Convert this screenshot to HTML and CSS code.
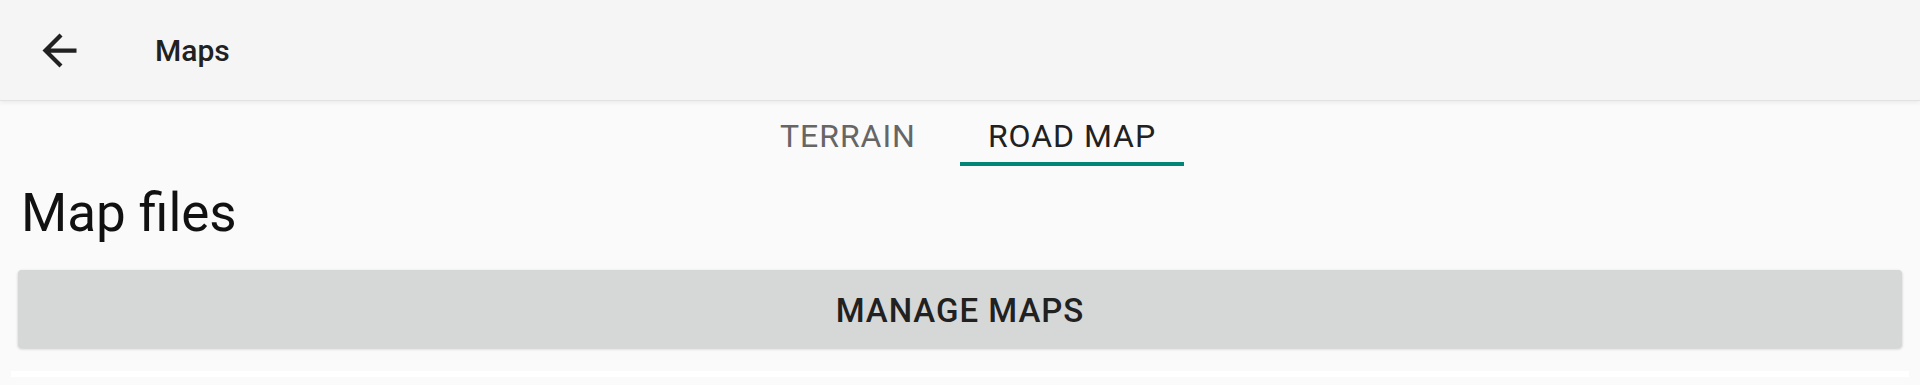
FILE: index.html
```html
<!DOCTYPE html>
<html>
<head>
<meta charset="utf-8">
<link rel="stylesheet" href="styles.css">
</head>
<body>
<header class="toolbar">
  <svg class="back" viewBox="0 0 24 24"><path d="M20 11H7.83l5.59-5.59L12 4l-8 8 8 8 1.41-1.41L7.83 13H20v-2z"/></svg>
  <span class="title">Maps</span>
</header>
<nav class="tabs">
  <div class="tab">TERRAIN</div>
  <div class="tab active">ROAD MAP</div>
</nav>
<main class="content">
  <h1 class="heading">Map files</h1>
  <button class="btn">MANAGE MAPS</button>
  <div class="strip"></div>
</main>
</body>
</html>
```
FILE: styles.css
```css
html, body {
  margin: 0;
  padding: 0;
  background: #fafafa;
  font-family: Roboto, "Liberation Sans", sans-serif;
  width: 1920px;
  height: 385px;
  overflow: hidden;
}
.toolbar {
  height: 101px;
  background: #f5f5f5;
  display: flex;
  align-items: center;
  border-bottom: 1px solid #e2e2e2;
  box-shadow: 0 2px 4px rgba(0,0,0,0.06);
  box-sizing: border-box;
  position: relative;
  z-index: 1;
}
.back {
  width: 51px;
  height: 51px;
  margin-left: 34px;
  fill: #212121;
}
.title {
  margin-left: 70px;
  font-size: 30px;
  font-weight: 500;
  color: #212121;
  margin-top: 1px;
}
.tabs {
  display: flex;
  justify-content: center;
  height: 65px;
}
.tab {
  width: 224px;
  box-sizing: border-box;
  display: flex;
  align-items: center;
  justify-content: center;
  font-size: 32px;
  letter-spacing: 0.03em;
  color: #666;
  border-bottom: 4px solid transparent;
  padding-top: 8px;
}
.tab.active {
  color: #212121;
  border-bottom-color: #008577;
}
.content {
  display: flex;
  flex-direction: column;
}
.heading {
  margin: 15px 0 0 21px;
  font-size: 53px;
  line-height: 64px;
  font-weight: 400;
  color: #111;
}
.btn {
  margin: 25px 18px 0 18px;
  height: 78px;
  border: none;
  border-radius: 4px;
  background: #d6d7d7;
  box-shadow: 0 1px 3px rgba(0,0,0,0.2);
  font-family: Roboto, "Liberation Sans", sans-serif;
  font-size: 33px;
  letter-spacing: 0.03em;
  font-weight: 500;
  color: #212121;
  padding-top: 3px;
}
.strip {
  margin: 23px 11px 0 11px;
  height: 6px;
  background: #fff;
}
```
